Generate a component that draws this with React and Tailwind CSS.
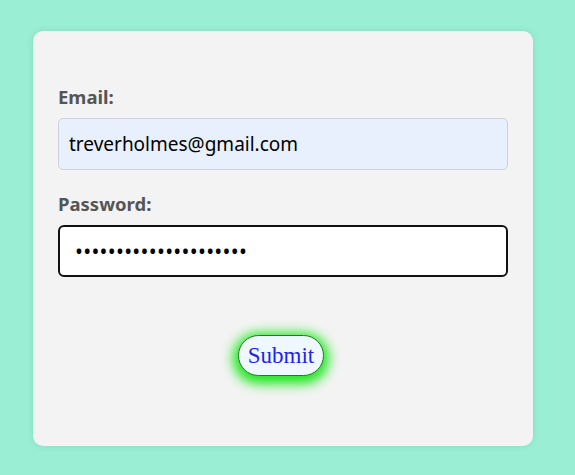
export default function App() {
  return (
    <div className="min-h-[475px] w-full bg-[#99eed4] pt-[31px] pl-[33px]">
      <form
        className="flex h-[415px] w-[500px] flex-col rounded-[10px] bg-[#f3f3f3] px-[25px] pt-[54px] shadow-[0_0_6px_rgba(0,80,50,0.12)]"
        style={{ fontFamily: '"Noto Sans", "Open Sans", sans-serif' }}
        onSubmit={(e) => e.preventDefault()}
      >
        <label className="block h-[24px] text-[18.5px] font-bold leading-[24px] text-[#555]">
          Email:
        </label>
        <input
          type="email"
          defaultValue="treverholmes@gmail.com"
          className="mt-[9px] h-[52px] w-full rounded-[5px] border border-[#cfcfd6] bg-[#e8f0fe] px-[10px] text-[19px] text-black outline-none"
        />
        <label className="mt-[22px] block h-[24px] text-[18.5px] font-bold leading-[24px] text-[#555]">
          Password:
        </label>
        <input
          type="password"
          defaultValue="treverholmes123456789"
          className="mt-[9px] h-[52px] w-full rounded-[6px] border-2 border-[#111] bg-white pl-[15px] pr-[9px] text-[21px] tracking-[0.3px] text-black outline-none"
        />
        <div className="mt-[58px] flex justify-center">
          <button
            type="submit"
            className="-ml-[4px] h-[41px] rounded-full border border-[#1f7a1f] bg-[#f0f8ff] px-[9px] text-[23px] leading-none text-[#2222ee] shadow-[0_3px_12px_5px_#1ee81e]"
            style={{ fontFamily: '"Liberation Serif", serif' }}
          >
            Submit
          </button>
        </div>
      </form>
    </div>
  );
}
